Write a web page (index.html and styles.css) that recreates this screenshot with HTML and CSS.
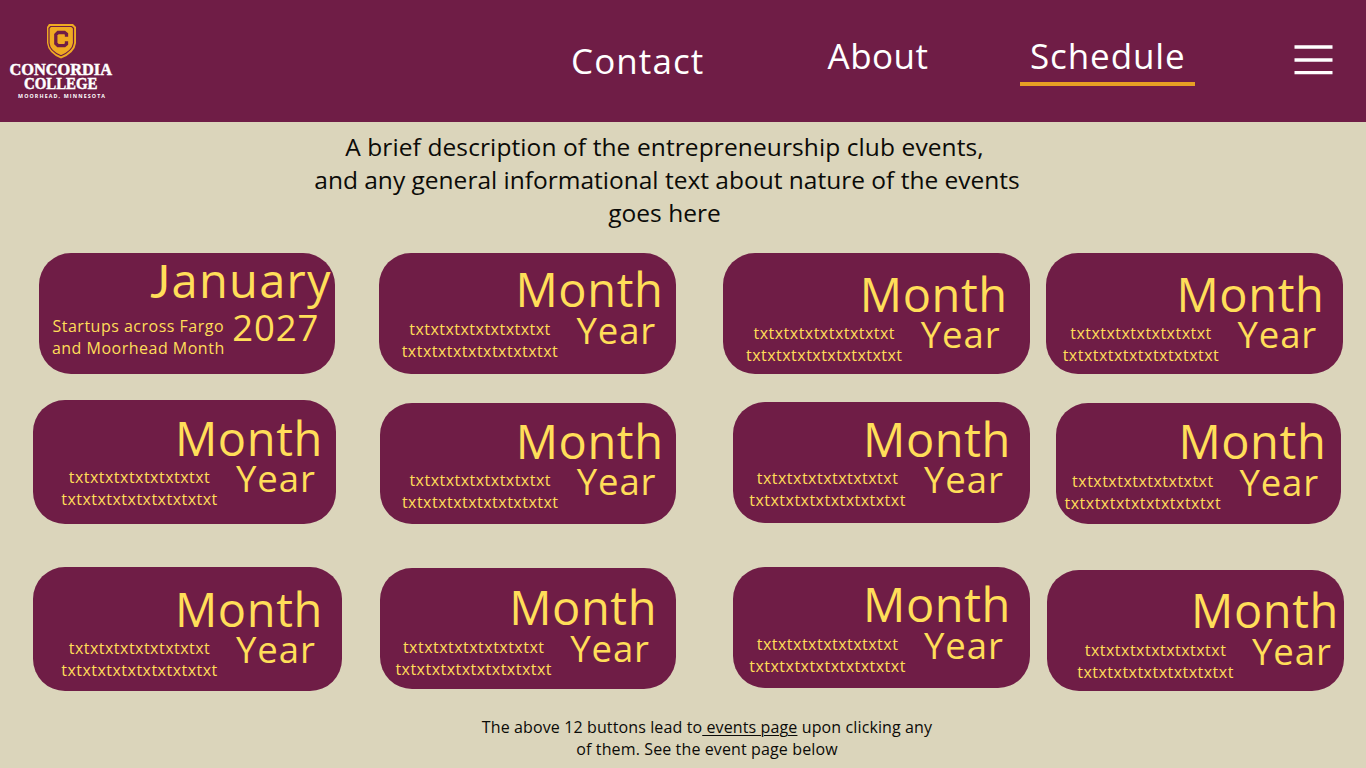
FILE: index.html
```
<!DOCTYPE html>
<html lang="en">
<head>
<meta charset="utf-8">
<title>Concordia College Entrepreneurship Club Events</title>
<link rel="stylesheet" href="styles.css">
</head>
<body>
<header class="header">
  <svg class="logo" viewBox="0 0 130 122" width="130" height="122">
    <path d="M49 24H73L76 27V43Q75 53 61 58.600Q48 53 47 43V27Z" fill="#efaa22"/>
    <path d="M50.500 26.500H71.700L73.500 28.300V43Q72.500 51 61 55.700Q49.600 51 49 43V28.300Z" fill="none" stroke="#6f1d46" stroke-width="1.200"/>
    <path d="M66.500 36.800V34L64.500 32.500H58L55.800 34.700V43.500L58 45.700H64.500L66.500 44V41.200" fill="none" stroke="#6f1d46" stroke-width="3.300"/>
    <text class="logo-name" x="9.500" y="75" textLength="102.500" lengthAdjust="spacingAndGlyphs">CONCORDIA</text>
    <text class="logo-name" x="24" y="89.300" textLength="73.500" lengthAdjust="spacingAndGlyphs">COLLEGE</text>
    <text class="logo-place" x="18" y="97.500" textLength="87">MOORHEAD, MINNESOTA</text>
  </svg>
  <nav class="nav">
    <a class="link contact">Contact</a>
    <a class="link about">About</a>
    <a class="link schedule">Schedule</a>
  </nav>
  <svg class="menu" viewBox="0 0 40 32" width="40" height="32">
    <path d="M.5 3H38.500M.5 16H38.500M.5 28.600H38.500" stroke="#fff" stroke-width="3.300"/>
  </svg>
</header>
<main>
  <p class="intro"><span class="intro-first">A brief description of the entrepreneurship club events,</span><br>and any general informational text about nature of the events<br><span class="intro-last">goes here</span></p>
  <section class="events">
    <div class="row row-1">
      <a class="card r1c1"><span class="month"><span class="initial">J</span>anuary</span><span class="detail"><span class="note">Startups across Fargo<br>and Moorhead Month</span><span class="year">2027</span></span></a>
      <a class="card r1c2"><span class="month">Month</span><span class="detail"><span class="note">txtxtxtxtxtxtxtxtxt<br>txtxtxtxtxtxtxtxtxtxt</span><span class="year">Year</span></span></a>
      <a class="card r1c3"><span class="month">Month</span><span class="detail"><span class="note">txtxtxtxtxtxtxtxtxt<br>txtxtxtxtxtxtxtxtxtxt</span><span class="year">Year</span></span></a>
      <a class="card r1c4"><span class="month">Month</span><span class="detail"><span class="note">txtxtxtxtxtxtxtxtxt<br>txtxtxtxtxtxtxtxtxtxt</span><span class="year">Year</span></span></a>
    </div>
    <div class="row row-2">
      <a class="card r2c1"><span class="month">Month</span><span class="detail"><span class="note">txtxtxtxtxtxtxtxtxt<br>txtxtxtxtxtxtxtxtxtxt</span><span class="year">Year</span></span></a>
      <a class="card r2c2"><span class="month">Month</span><span class="detail"><span class="note">txtxtxtxtxtxtxtxtxt<br>txtxtxtxtxtxtxtxtxtxt</span><span class="year">Year</span></span></a>
      <a class="card r2c3"><span class="month">Month</span><span class="detail"><span class="note">txtxtxtxtxtxtxtxtxt<br>txtxtxtxtxtxtxtxtxtxt</span><span class="year">Year</span></span></a>
      <a class="card r2c4"><span class="month">Month</span><span class="detail"><span class="note">txtxtxtxtxtxtxtxtxt<br>txtxtxtxtxtxtxtxtxtxt</span><span class="year">Year</span></span></a>
    </div>
    <div class="row row-3">
      <a class="card r3c1"><span class="month">Month</span><span class="detail"><span class="note">txtxtxtxtxtxtxtxtxt<br>txtxtxtxtxtxtxtxtxtxt</span><span class="year">Year</span></span></a>
      <a class="card r3c2"><span class="month">Month</span><span class="detail"><span class="note">txtxtxtxtxtxtxtxtxt<br>txtxtxtxtxtxtxtxtxtxt</span><span class="year">Year</span></span></a>
      <a class="card r3c3"><span class="month">Month</span><span class="detail"><span class="note">txtxtxtxtxtxtxtxtxt<br>txtxtxtxtxtxtxtxtxtxt</span><span class="year">Year</span></span></a>
      <a class="card r3c4"><span class="month">Month</span><span class="detail"><span class="note">txtxtxtxtxtxtxtxtxt<br>txtxtxtxtxtxtxtxtxtxt</span><span class="year">Year</span></span></a>
    </div>
  </section>
  <p class="footnote">The above 12 buttons lead to<a class="footnote-link"> events page</a> upon clicking any<br>of them. See the event page below</p>
</main>
</body>
</html>
```
FILE: styles.css
```
* { box-sizing: border-box; }
body {
  margin: 0;
  height: 768px;
  overflow: hidden;
  background: #dbd5bb;
  color: #0b0b08;
  font-family: "Open Sans", "Noto Sans", sans-serif;
}
.header {
  display: flex;
  align-items: flex-start;
  height: 122px;
  background: #6f1d46;
  color: #fff;
}
.logo { flex: none; }
.logo-name { font: bold 16.5px "Liberation Serif", serif; fill: #fff; stroke: #fff; stroke-width: .5px; }
.logo-place { font: bold 5.3px "Open Sans", sans-serif; fill: #fff; }
.nav { display: flex; align-items: flex-start; margin-left: 440px; width: 626px; }
.link { flex: none; font-size: 35px; line-height: 44px; white-space: nowrap; }
.contact { margin-top: 39px; padding-left: 1px; width: 257.500px; letter-spacing: 1.1px; }
.about { margin-top: 34px; width: 192.500px; letter-spacing: .5px; }
.schedule {
  margin-top: 34px;
  width: 175px;
  height: 52px;
  padding-left: 10px;
  border-bottom: 4px solid #e6a024;
  letter-spacing: .9px;
}
.menu { flex: none; margin: 44px 0 0 98px; }
.intro {
  margin: 8px 0 0;
  width: 1334px;
  font-size: 24.5px;
  line-height: 33px;
  text-align: center;
}
.intro-first { padding-right: 5px; letter-spacing: .1px; }
.intro-last { padding-right: 5px; }
.events { margin-top: 24px; height: 451px; }
.row { display: flex; align-items: flex-start; }
.row-1 { height: 147px; padding-left: 38.800px; }
.row-2 { height: 167px; padding-left: 32.500px; }
.row-3 { height: 137px; padding-left: 32.500px; }
.card {
  flex: none;
  display: flex;
  flex-direction: column;
  width: 296.500px;
  height: 121px;
  border-radius: 32px;
  background: #6f1d46;
  color: #ffde59;
  white-space: nowrap;
}
.month { padding-left: 114px; font-size: 47px; line-height: 49px; letter-spacing: .6px; }
.detail { display: flex; align-items: flex-start; margin-top: -3.500px; }
.note {
  width: 157px;
  margin-top: 7.200px;
  font-size: 16px;
  line-height: 22px;
  letter-spacing: .48px;
  text-align: center;
}
.year { margin-left: 18px; font-size: 36.5px; line-height: 38px; letter-spacing: .9px; }

.r1c1 { padding: 4px 0 0 13px; }
.r1c1 .month { padding-left: 98.500px; line-height: 47.500px; letter-spacing: 1.3px; }
.initial { font-family: Lato, sans-serif; line-height: 1; }
.r1c1 .detail { margin-top: 3.500px; }
.r1c1 .note { width: 173px; letter-spacing: .5px; }
.r1c1 .year { margin-left: 7.500px; letter-spacing: .9px; }
.r1c2 { margin-left: 44.200px; padding: 12px 0 0 22px; }
.r1c3 { margin-left: 46.800px; width: 307px; padding: 16.500px 0 0 23px; }
.r1c4 { margin-left: 16.700px; width: 297px; padding: 16.500px 0 0 16px; }

.r2c1 { width: 303px; height: 124px; padding: 13.500px 0 0 28.500px; }
.r2c2 { margin: 3px 0 0 44.200px; padding: 13.500px 0 0 22px; }
.r2c3 { margin: 2px 0 0 57.200px; padding: 12.500px 0 0 15.700px; }
.r2c4 { margin: 3px 0 0 26px; width: 285.500px; padding: 14px 0 0 8.500px; }

.r3c1 { width: 309px; height: 124px; padding: 17.800px 0 0 28.500px; }
.r3c2 { margin: 1px 0 0 38.200px; padding: 15px 0 0 15.500px; }
.r3c3 { margin-left: 57.200px; padding: 13px 0 0 15.700px; }
.r3c4 { margin: 3px 0 0 16.700px; width: 297px; padding: 16.300px 0 0 30.500px; }

.footnote {
  margin: 12px 0 0;
  width: 1414px;
  font-size: 16px;
  line-height: 22px;
  letter-spacing: .12px;
  text-align: center;
}
.footnote-link { text-decoration: underline; text-underline-offset: 2px; text-decoration-thickness: 1px; }
```
